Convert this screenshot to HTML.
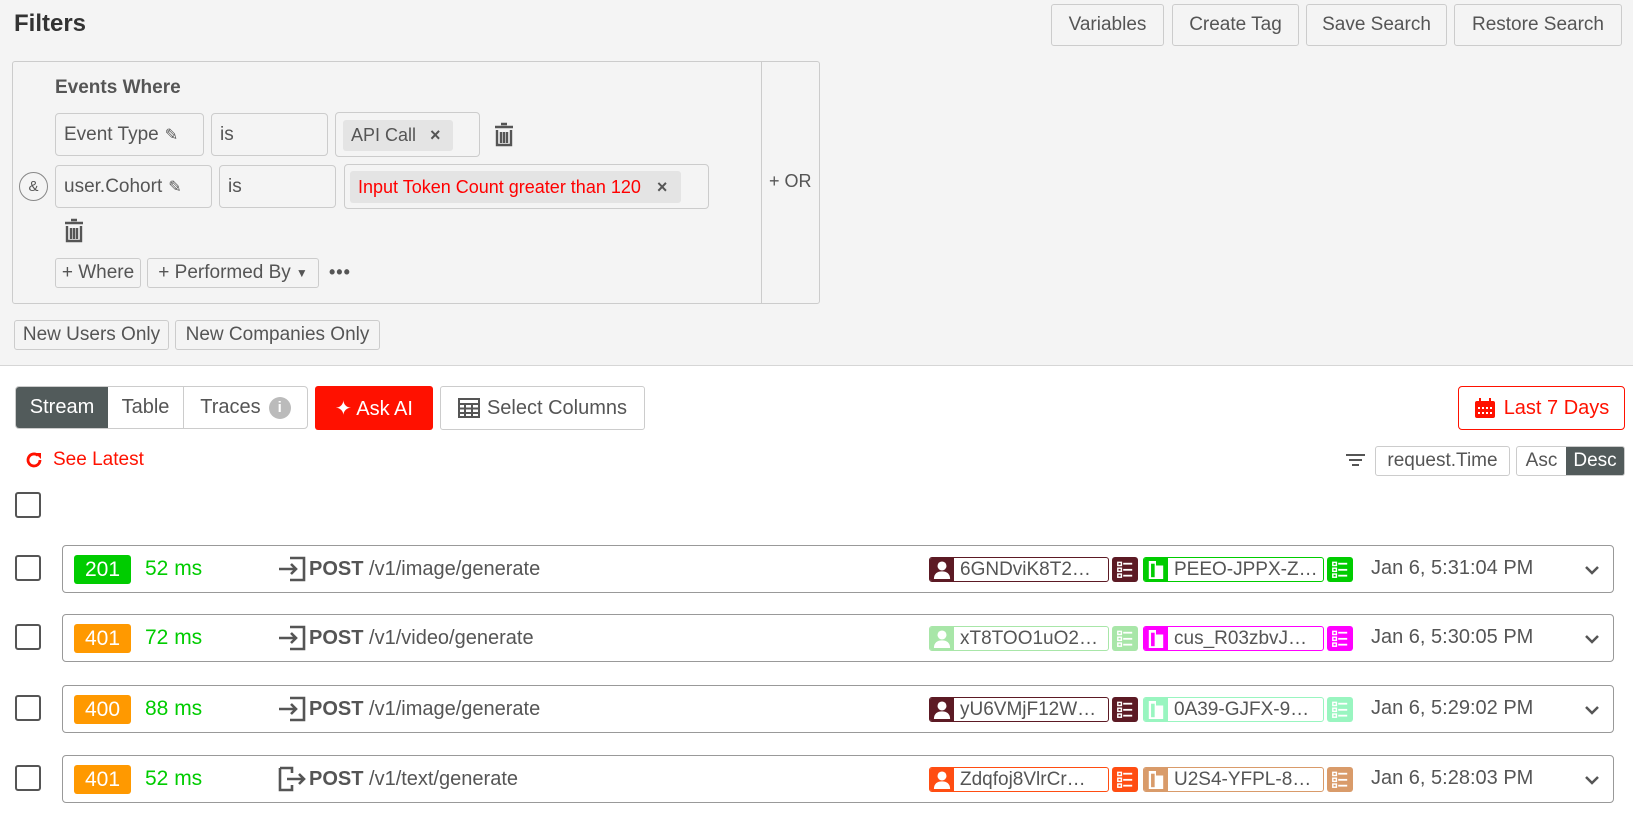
<!DOCTYPE html><html><head><meta charset="utf-8"><style>
*{box-sizing:border-box;margin:0;padding:0}
body{width:1633px;height:820px;overflow:hidden;background:#fff;font-family:"Liberation Sans",sans-serif;color:#555;position:relative;font-size:19px}
.a{position:absolute}
.top{left:0;top:0;width:1633px;height:366px;background:#f4f4f4;border-bottom:1px solid #d6d6d6}
.btn{position:absolute;border:1px solid #ccc;border-radius:3px;background:#f4f4f4;display:flex;align-items:center;justify-content:center;color:#555;white-space:nowrap}
.fld{position:absolute;border:1px solid #ccc;border-radius:4px;display:flex;align-items:center;padding-left:8px;white-space:nowrap}
.chip{position:absolute;background:#e4e4e4;border-radius:3px;display:flex;align-items:center;padding-left:8px;white-space:nowrap;font-size:18px}
.cb{position:absolute;width:26px;height:26px;border:2.5px solid #555;border-radius:3px;left:15px}
.row{position:absolute;left:62px;width:1552px;height:48px;border:1px solid #999;border-radius:4px}
.st{position:absolute;left:11px;top:9px;width:57px;height:29px;border-radius:3px;color:#fff;font-size:21px;display:flex;align-items:center;justify-content:center}
.ms{position:absolute;left:82px;top:11px;font-size:21px}
.path{position:absolute;left:214px;top:10px;font-size:20px;display:flex;align-items:center;white-space:nowrap}
.uc{position:absolute;top:11px;height:25px;border:1px solid;border-radius:3px;display:flex;align-items:center;overflow:hidden;background:#fff}
.uc .ic{width:24px;height:100%;display:flex;align-items:center;justify-content:center;flex:none}
.uc span{padding-left:6px;font-size:19px;color:#555}
.sq{position:absolute;top:11px;width:26px;height:25px;border-radius:3px;display:flex;align-items:center;justify-content:center}
.dt{position:absolute;left:1308px;top:11px;font-size:20px;white-space:nowrap}
.chev{position:absolute;left:1520px;top:15px}
</style></head><body>
<svg width="0" height="0" style="position:absolute"><defs>
<symbol id="usr" viewBox="0 0 20 22"><circle cx="10" cy="6.5" r="5" fill="#fff"/><path d="M1 21c0-6 4-8.5 9-8.5s9 2.5 9 8.5z" fill="#fff"/></symbol>
<symbol id="co" viewBox="0 0 20 22"><path d="M2 1h8v5h8v15H2z" fill="#fff"/><rect x="4.5" y="4" width="4" height="15" fill="currentColor"/></symbol>
<symbol id="lst" viewBox="0 0 20 22"><g fill="none" stroke="#fff" stroke-width="1.6"><rect x="2" y="2.5" width="4" height="3.5"/><rect x="2" y="9" width="4" height="3.5"/><rect x="2" y="15.5" width="4" height="3.5"/></g><g fill="#fff"><rect x="8" y="3" width="10" height="2"/><rect x="8" y="9.8" width="10" height="2"/><rect x="8" y="16.3" width="10" height="2"/></g></symbol>
</defs></svg>
<div class="a top"></div>
<div class="a" style="left:14px;top:10px;font-size:24px;font-weight:bold;color:#333">Filters</div>
<div class="btn" style="left:1051px;top:4px;width:113px;height:42px">Variables</div>
<div class="btn" style="left:1172px;top:4px;width:127px;height:42px">Create Tag</div>
<div class="btn" style="left:1306px;top:4px;width:141px;height:42px">Save Search</div>
<div class="btn" style="left:1454px;top:4px;width:168px;height:42px">Restore Search</div>

<div class="a" style="left:12px;top:61px;width:808px;height:243px;border:1px solid #ccc;border-radius:3px"></div>
<div class="a" style="left:761px;top:61px;width:1px;height:243px;background:#ccc"></div>
<div class="a" style="left:55px;top:77px;font-weight:bold;font-size:19px">Events Where</div>
<div class="fld" style="left:55px;top:113px;width:149px;height:43px">Event Type <span style="font-size:16px;margin-left:6px">✎</span></div>
<div class="fld" style="left:211px;top:113px;width:117px;height:43px">is</div>
<div class="fld" style="left:335px;top:112px;width:145px;height:45px"></div>
<div class="chip" style="left:343px;top:120px;width:110px;height:31px">API Call <span style="margin-left:14px;font-weight:bold">×</span></div>
<svg class="a" style="left:493px;top:122px" width="22" height="26" viewBox="0 0 22 26"><path d="M8 2h6M2 5h18M4 8v15h14V8M8 10v11M11 10v11M14 10v11" stroke="#555" stroke-width="2.4" fill="none"/></svg>
<div class="a" style="left:19px;top:172px;width:29px;height:29px;border:1px solid #888;border-radius:50%;display:flex;align-items:center;justify-content:center;font-size:15px">&amp;</div>
<div class="fld" style="left:55px;top:165px;width:157px;height:43px">user.Cohort <span style="font-size:16px;margin-left:6px">✎</span></div>
<div class="fld" style="left:219px;top:165px;width:117px;height:43px">is</div>
<div class="fld" style="left:344px;top:164px;width:365px;height:45px"></div>
<div class="chip" style="left:350px;top:171px;width:331px;height:32px;color:#f00">Input Token Count greater than 120 <span style="margin-left:16px;font-weight:bold;color:#555">×</span></div>
<svg class="a" style="left:63px;top:218px" width="22" height="26" viewBox="0 0 22 26"><path d="M8 2h6M2 5h18M4 8v15h14V8M8 10v11M11 10v11M14 10v11" stroke="#555" stroke-width="2.4" fill="none"/></svg>
<div class="btn" style="left:55px;top:258px;width:86px;height:30px">+ Where</div>
<div class="btn" style="left:147px;top:258px;width:172px;height:30px">+ Performed By <span style="font-size:12px;margin-left:5px">▼</span></div>
<div class="a" style="left:329px;top:262px;font-size:18px;font-weight:bold;letter-spacing:1px">•••</div>
<div class="a" style="left:769px;top:171px;font-size:18px">+ OR</div>
<div class="btn" style="left:14px;top:320px;width:155px;height:30px">New Users Only</div>
<div class="btn" style="left:175px;top:320px;width:205px;height:30px">New Companies Only</div>

<div class="a" style="left:15px;top:386px;width:293px;height:43px;border:1px solid #ccc;border-radius:4px;display:flex;overflow:hidden;font-size:20px">
<div style="width:92px;background:#525b5b;color:#fff;display:flex;align-items:center;justify-content:center">Stream</div>
<div style="width:76px;border-right:1px solid #ccc;display:flex;align-items:center;justify-content:center">Table</div>
<div style="flex:1;display:flex;align-items:center;justify-content:center">Traces <span style="display:inline-block;width:22px;height:22px;border-radius:50%;background:#bbb;color:#fff;font-size:15px;font-weight:bold;text-align:center;line-height:22px;margin-left:8px">i</span></div></div>
<div class="a" style="left:315px;top:386px;width:118px;height:44px;background:#f10;border-radius:3px;color:#fff;display:flex;align-items:center;justify-content:center;font-size:20px">✦ Ask AI</div>
<div class="btn" style="left:440px;top:386px;width:205px;height:44px;background:#fff;font-size:20px"><svg width="22" height="20" viewBox="0 0 22 20" style="margin-right:7px"><path d="M1 1h20v18H1zM1 6h20M1 10.5h20M1 15h20M7 6v13M14 6v13" stroke="#555" stroke-width="2" fill="none"/></svg>Select Columns</div>
<div class="a" style="left:1458px;top:386px;width:167px;height:44px;border:1px solid #f10;border-radius:4px;color:#f10;display:flex;align-items:center;justify-content:center;font-size:20px"><svg width="22" height="22" viewBox="0 0 22 22" style="margin-right:8px"><rect x="1" y="4" width="20" height="17" rx="2" fill="#f10"/><rect x="5" y="1" width="2" height="5" fill="#f10"/><rect x="15" y="1" width="2" height="5" fill="#f10"/><g fill="#fff"><rect x="4" y="10" width="2" height="2"/><rect x="8" y="10" width="2" height="2"/><rect x="12" y="10" width="2" height="2"/><rect x="16" y="10" width="2" height="2"/><rect x="4" y="15" width="2" height="2"/><rect x="8" y="15" width="2" height="2"/><rect x="12" y="15" width="2" height="2"/><rect x="16" y="15" width="2" height="2"/></g></svg>Last 7 Days</div>

<div class="a" style="left:25px;top:449px;color:#f10;font-size:19px;display:flex;align-items:center"><svg width="18" height="18" viewBox="0 0 18 18" style="margin-right:10px"><path d="M15 9a6 6 0 1 1-2-4.5" stroke="#f10" stroke-width="2.8" fill="none"/><path d="M10 2h6v6z" fill="#f10"/></svg>See Latest</div>
<svg class="a" style="left:1345px;top:453px" width="21" height="16" viewBox="0 0 21 16"><path d="M1 2h19M4 7h13M7 12h7" stroke="#555" stroke-width="2"/></svg>
<div class="btn" style="left:1375px;top:446px;width:135px;height:30px;background:#fff">request.Time</div>
<div class="a" style="left:1516px;top:446px;width:109px;height:30px;border:1px solid #ccc;border-radius:3px;display:flex;overflow:hidden"><div style="width:49px;display:flex;align-items:center;justify-content:center">Asc</div><div style="flex:1;background:#525b5b;color:#fff;display:flex;align-items:center;justify-content:center">Desc</div></div>
<div class="cb" style="top:492px"></div>

<div class="cb" style="top:555px"></div>
<div class="row" style="top:545px">
<div class="st" style="background:#00cc00">201</div><div class="ms" style="color:#00cc00">52 ms</div>
<div class="path"><svg width="30" height="26" viewBox="0 0 30 26"><path d="M13 2h14v22H13M2 13h17M14 8l5 5-5 5" stroke="#555" stroke-width="2.6" fill="none"/></svg><b style="margin-left:2px">POST</b>&nbsp;/v1/image/generate</div>
<div class="uc" style="left:866px;width:180px;border-color:#5c1a24"><div class="ic" style="background:#5c1a24"><svg width="18" height="20"><use href="#usr"/></svg></div><span>6GNDviK8T2…</span></div><div class="sq" style="left:1049px;background:#5c1a24"><svg width="18" height="20"><use href="#lst"/></svg></div>
<div class="uc" style="left:1080px;width:181px;border-color:#00cc00"><div class="ic" style="background:#00cc00;color:#00cc00"><svg width="18" height="20"><use href="#co"/></svg></div><span>PEEO-JPPX-Z…</span></div><div class="sq" style="left:1264px;background:#00cc00"><svg width="18" height="20"><use href="#lst"/></svg></div>
<div class="dt">Jan 6, 5:31:04 PM</div>
<svg class="chev" width="18" height="18" viewBox="0 0 18 18"><path d="M3 6l6 6 6-6" stroke="#555" stroke-width="2.5" fill="none"/></svg></div>

<div class="cb" style="top:624px"></div>
<div class="row" style="top:614px">
<div class="st" style="background:#ff9900">401</div><div class="ms" style="color:#00cc00">72 ms</div>
<div class="path"><svg width="30" height="26" viewBox="0 0 30 26"><path d="M13 2h14v22H13M2 13h17M14 8l5 5-5 5" stroke="#555" stroke-width="2.6" fill="none"/></svg><b style="margin-left:2px">POST</b>&nbsp;/v1/video/generate</div>
<div class="uc" style="left:866px;width:180px;border-color:#a8e6a8"><div class="ic" style="background:#a8e6a8"><svg width="18" height="20"><use href="#usr"/></svg></div><span>xT8TOO1uO2…</span></div><div class="sq" style="left:1049px;background:#a8e6a8"><svg width="18" height="20"><use href="#lst"/></svg></div>
<div class="uc" style="left:1080px;width:181px;border-color:#ff00ff"><div class="ic" style="background:#ff00ff;color:#ff00ff"><svg width="18" height="20"><use href="#co"/></svg></div><span>cus_R03zbvJ…</span></div><div class="sq" style="left:1264px;background:#ff00ff"><svg width="18" height="20"><use href="#lst"/></svg></div>
<div class="dt">Jan 6, 5:30:05 PM</div>
<svg class="chev" width="18" height="18" viewBox="0 0 18 18"><path d="M3 6l6 6 6-6" stroke="#555" stroke-width="2.5" fill="none"/></svg></div>

<div class="cb" style="top:695px"></div>
<div class="row" style="top:685px">
<div class="st" style="background:#ff9900">400</div><div class="ms" style="color:#00cc00">88 ms</div>
<div class="path"><svg width="30" height="26" viewBox="0 0 30 26"><path d="M13 2h14v22H13M2 13h17M14 8l5 5-5 5" stroke="#555" stroke-width="2.6" fill="none"/></svg><b style="margin-left:2px">POST</b>&nbsp;/v1/image/generate</div>
<div class="uc" style="left:866px;width:180px;border-color:#5c1a24"><div class="ic" style="background:#5c1a24"><svg width="18" height="20"><use href="#usr"/></svg></div><span>yU6VMjF12W…</span></div><div class="sq" style="left:1049px;background:#5c1a24"><svg width="18" height="20"><use href="#lst"/></svg></div>
<div class="uc" style="left:1080px;width:181px;border-color:#99f5c0"><div class="ic" style="background:#99f5c0;color:#99f5c0"><svg width="18" height="20"><use href="#co"/></svg></div><span>0A39-GJFX-9…</span></div><div class="sq" style="left:1264px;background:#99f5c0"><svg width="18" height="20"><use href="#lst"/></svg></div>
<div class="dt">Jan 6, 5:29:02 PM</div>
<svg class="chev" width="18" height="18" viewBox="0 0 18 18"><path d="M3 6l6 6 6-6" stroke="#555" stroke-width="2.5" fill="none"/></svg></div>

<div class="cb" style="top:765px"></div>
<div class="row" style="top:755px">
<div class="st" style="background:#ff9900">401</div><div class="ms" style="color:#00cc00">52 ms</div>
<div class="path"><svg width="30" height="26" viewBox="0 0 30 26"><path d="M3 2h12v5M3 2v22h12v-5M10 13h17M22 8l5 5-5 5" stroke="#555" stroke-width="2.6" fill="none"/></svg><b style="margin-left:2px">POST</b>&nbsp;/v1/text/generate</div>
<div class="uc" style="left:866px;width:180px;border-color:#ff4d12"><div class="ic" style="background:#ff4d12"><svg width="18" height="20"><use href="#usr"/></svg></div><span>Zdqfoj8VlrCr…</span></div><div class="sq" style="left:1049px;background:#ff4d12"><svg width="18" height="20"><use href="#lst"/></svg></div>
<div class="uc" style="left:1080px;width:181px;border-color:#d99b6a"><div class="ic" style="background:#d99b6a;color:#d99b6a"><svg width="18" height="20"><use href="#co"/></svg></div><span>U2S4-YFPL-8…</span></div><div class="sq" style="left:1264px;background:#d99b6a"><svg width="18" height="20"><use href="#lst"/></svg></div>
<div class="dt">Jan 6, 5:28:03 PM</div>
<svg class="chev" width="18" height="18" viewBox="0 0 18 18"><path d="M3 6l6 6 6-6" stroke="#555" stroke-width="2.5" fill="none"/></svg></div>
</body></html>
